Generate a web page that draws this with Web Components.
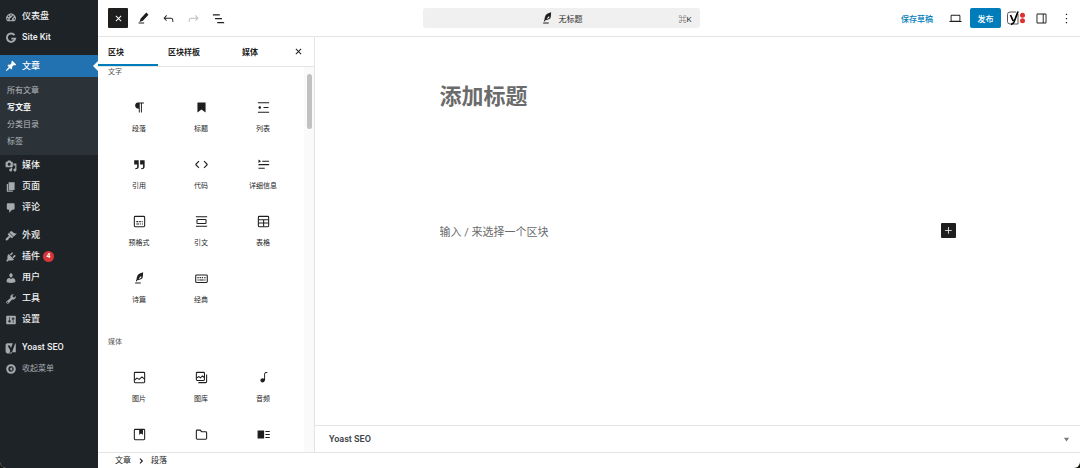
<!DOCTYPE html>
<html lang="zh-CN">
<head>
<meta charset="utf-8">
<meta name="viewport" content="width=device-width, initial-scale=1">
<title>无标题 - 写文章</title>
<style>
  html, body { margin: 0; background: #14160a; }
  body { font-family: Roboto, "Noto Sans CJK SC", sans-serif; font-size: 8px; color: #1e1e1e; }
</style>
</head>
<body>
<wp-app>
  <wp-sidebar slot="sidebar"></wp-sidebar>
  <wp-topbar slot="top"></wp-topbar>
  <wp-inserter slot="inserter">
    <wp-block-group label="文字">
      <wp-block icon="paragraph">段落</wp-block>
      <wp-block icon="heading">标题</wp-block>
      <wp-block icon="list">列表</wp-block>
      <wp-block icon="quote">引用</wp-block>
      <wp-block icon="code">代码</wp-block>
      <wp-block icon="details">详细信息</wp-block>
      <wp-block icon="preformatted">预格式</wp-block>
      <wp-block icon="pullquote">引文</wp-block>
      <wp-block icon="table">表格</wp-block>
      <wp-block icon="verse">诗篇</wp-block>
      <wp-block icon="classic">经典</wp-block>
    </wp-block-group>
    <wp-block-group label="媒体">
      <wp-block icon="image">图片</wp-block>
      <wp-block icon="gallery">图库</wp-block>
      <wp-block icon="audio">音频</wp-block>
      <wp-block icon="cover"></wp-block>
      <wp-block icon="file"></wp-block>
      <wp-block icon="mediatext"></wp-block>
    </wp-block-group>
  </wp-inserter>
  <wp-editor slot="editor"></wp-editor>
  <wp-breadcrumb slot="footer"></wp-breadcrumb>
</wp-app>

<script>
const frame = '<rect x="3.75" y="3.75" width="16.5" height="16.5" rx="1.5" fill="none" stroke="currentColor" stroke-width="1.7"/>';
const line = d => `<path d="${d}" fill="none" stroke="currentColor" stroke-width="1.7"/>`;
const fill = d => `<path fill-rule="evenodd" d="${d}"/>`;

/* name: [viewBox size, markup] */
const ICONS = {
  dashboard: [20, fill('M3.76 17h12.48A8 8 0 1 0 3.76 17zM9 6h2v2H9zM5 8h2v2H5zM13.6 7.4l1.3 1.2-3.3 4.2a2 2 0 1 1-1.9-1.3zM3.5 12h2v2h-2zM14.5 12h2v2h-2z')],
  google: [20, '<path d="M15.8 5.200A7 7 0 1 0 17 11H10.500" fill="none" stroke="currentColor" stroke-width="3.200"/>'],
  post: [20, fill('M10.44 3.02l1.82-1.82 6.36 6.35-1.83 1.82c-1.05-.68-2.48-.57-3.41.36l-.75.75c-.92.93-1.04 2.35-.35 3.41l-1.83 1.82-2.41-2.41-2.8 2.79c-.42.42-3.38 2.71-3.8 2.29s1.86-3.39 2.28-3.81l2.79-2.79L4.1 9.36l1.83-1.82c1.05.69 2.48.57 3.4-.36l.75-.75c.93-.92 1.05-2.35.36-3.41z')],
  media: [20, fill('M13 11V4c0-.55-.45-1-1-1h-1.67L9 1H5L3.67 3H2c-.55 0-1 .45-1 1v7c0 .55.45 1 1 1h10c.55 0 1-.45 1-1zM7 4.5c1.38 0 2.5 1.12 2.5 2.5S8.38 9.5 7 9.5 4.5 8.38 4.5 7 5.62 4.5 7 4.5zM14 6h5v10.5c0 1.38-1.12 2.5-2.5 2.5S14 17.88 14 16.5s1.12-2.5 2.5-2.5c.17 0 .34.02.5.05V9h-3V6zm-4 8.05V13h2v3.5c0 1.38-1.12 2.5-2.5 2.5S7 17.88 7 16.5 8.12 14 9.5 14c.17 0 .34.02.5.05z')],
  page: [20, fill('M6 15V2h10v13H6zm-1 1h8v2H3V5h2v11z')],
  comments: [20, fill('M5 2h9c1.1 0 2 .9 2 2v7c0 1.1-.9 2-2 2h-2l-5 5v-5H5c-1.1 0-2-.9-2-2V4c0-1.1.9-2 2-2z')],
  appearance: [20, fill('M14.48 11.06L7.41 3.99l1.5-1.5c.5-.56 2.3-.47 3.51.32 1.21.8 1.43 1.28 2.91 2.1 1.18.64 2.45 1.26 4.45.85zm-.71.71L6.7 4.7 4.93 6.47c-.39.39-.39 1.02 0 1.41l1.06 1.06c.39.39.39 1.03 0 1.42-.6.6-1.43 1.11-2.21 1.69-.35.26-.7.53-1.01.84C1.43 14.23.4 16.08 1.4 17.07c.99 1 2.84-.03 4.18-1.36.31-.31.58-.66.85-1.02.57-.78 1.08-1.61 1.69-2.21.39-.39 1.02-.39 1.41 0l1.06 1.06c.39.39 1.02.39 1.41 0z')],
  plugins: [20, fill('M13.11 4.36L9.87 7.6 8 5.73l3.24-3.24c.35-.34 1.05-.2 1.56.32.52.51.66 1.21.31 1.55zm-8 1.77l.91-1.12 9.01 9.01-1.19.84c-.71.71-2.63 1.16-3.82 1.16H6.14L4.9 17.26c-.59.59-1.54.59-2.12 0-.59-.58-.59-1.53 0-2.12l1.24-1.24v-3.88c0-1.13.4-3.19 1.09-3.89zm7.26 3.97l3.24-3.24c.34-.35 1.04-.21 1.55.31.52.51.66 1.21.31 1.55l-3.24 3.25z')],
  users: [20, fill('M10 9.25c-2.27 0-2.73-3.44-2.73-3.44C7 4.02 7.82 2 9.97 2c2.16 0 2.98 2.02 2.71 3.81 0 0-.41 3.44-2.68 3.44zm0 2.57L12.72 10c2.39 0 4.52 2.33 4.52 4.53v2.49s-3.65 1.13-7.24 1.13c-3.65 0-7.24-1.13-7.24-1.13v-2.49c0-2.25 1.94-4.48 4.47-4.48z')],
  tools: [20, fill('M16.68 9.77c-1.34 1.34-3.3 1.67-4.95.99l-5.41 6.52c-.99.99-2.59.99-3.58 0s-.99-2.59 0-3.57l6.52-5.42c-.68-1.65-.35-3.61.99-4.95 1.28-1.28 3.12-1.62 4.72-1.06l-2.89 2.89 2.82 2.82 2.86-2.87c.53 1.58.18 3.39-1.08 4.65zM3.81 16.21c.4.39 1.04.39 1.43 0 .4-.4.4-1.04 0-1.43-.39-.4-1.03-.4-1.43 0-.39.39-.39 1.03 0 1.43z')],
  settings: [20, fill('M18 16V4c0-.55-.45-1-1-1H3c-.55 0-1 .45-1 1v12c0 .55.45 1 1 1h14c.55 0 1-.45 1-1zM8 11h1c.55 0 1 .45 1 1s-.45 1-1 1H8v1.5c0 .28-.22.5-.5.5s-.5-.22-.5-.5V13H6c-.55 0-1-.45-1-1s.45-1 1-1h1V5.5c0-.28.22-.5.5-.5s.5.22.5.5V11zm5-2h-1c-.55 0-1-.45-1-1s.45-1 1-1h1V5.5c0-.28.22-.5.5-.5s.5.22.5.5V7h1c.55 0 1 .45 1 1s-.45 1-1 1h-1v5.5c0 .28-.22.5-.5.5s-.5-.22-.5-.5V9z')],
  collapse: [20, fill('M10 2a8 8 0 1 0 0 16 8 8 0 0 0 0-16zM10 5.6a4.4 4.4 0 1 1 0 8.8 4.4 4.4 0 0 1 0-8.8zM12 6.800v6.400L7.600 10z')],
  yoastmenu: [20, '<path d="M4 2h9l-3 8-2-4H5l4 8-1 3H18V4a2 2 0 0 0-1-2l-6 17H4a3 3 0 0 1-3-3V5a3 3 0 0 1 3-3z"/><path d="M5 6l4 7M15.500 1L8 18.500" fill="none" stroke="#1d2327" stroke-width="1.200"/>'],
  close: [24, fill('M12 13.06l3.712 3.713 1.061-1.06L13.061 12l3.712-3.712-1.06-1.06L12 10.938 8.288 7.227l-1.061 1.06L10.939 12l-3.712 3.712 1.06 1.061L12 13.061z')],
  pencil: [24, fill('m20 6-3.5-3.5-9 9.5-2 5.5 5.5-2L20 6Zm-7 12.5H4V20h9v-1.5Z')],
  undo: [24, fill('M18.3 11.7c-.6-.6-1.4-.9-2.3-.9H6.7l2.9-3.3-1.1-1-4.5 5L8.5 16l1-1-2.7-2.7H16c.5 0 .9.2 1.3.5 1 1 1 3.4 1 4.5v.3h1.5v-.2c0-1.5 0-4.3-1.5-5.7z')],
  redo: [24, '<g transform="matrix(-1 0 0 1 24 0)">' + fill('M18.3 11.7c-.6-.6-1.4-.9-2.3-.9H6.7l2.9-3.3-1.1-1-4.5 5L8.5 16l1-1-2.7-2.7H16c.5 0 .9.2 1.3.5 1 1 1 3.4 1 4.5v.3h1.5v-.2c0-1.5 0-4.3-1.5-5.7z') + '</g>'],
  listview: [24, fill('M3 5h11v2H3zM6.5 11.2h11v2h-11zM10 17.500h11v2H10z')],
  desktop: [24, fill('M20.5 16h-.7V8c0-1.1-.9-2-2-2H6.2c-1.1 0-2 .9-2 2v8h-.7c-.8 0-1.5.7-1.5 1.5h20c0-.8-.7-1.5-1.5-1.5zM5.7 8c0-.3.2-.5.5-.5h11.6c.3 0 .5.2.5.5v7.6H5.7V8z')],
  drawer: [24, fill('M18 4H6c-1.1 0-2 .9-2 2v12c0 1.1.9 2 2 2h12c1.1 0 2-.9 2-2V6c0-1.1-.9-2-2-2zm-4 14.5H6c-.3 0-.5-.2-.5-.5V6c0-.3.2-.5.5-.5h8v13zm4.5-.5c0 .3-.2.5-.5.5h-2.5v-13H18c.3 0 .5.2.5.5v12z')],
  more: [24, fill('M13 19.5h-2v-2h2zM13 13h-2v-2h2zM13 6.5h-2v-2h2z')],
  plus: [24, fill('M11 12.5V18h1.5v-5.5H18V11h-5.5V5.5H11V11H5.5v1.5z')],
  chevron: [24, '<path d="M9 5l7 7-7 7" fill="none" stroke="currentColor" stroke-width="3.500"/>'],
  toggle: [24, fill('M3 6h18l-9 13z')],
  yoast: [20, '<path d="M10 4H4a2.500 2.500 0 0 0-2.500 2.500v7A2.500 2.500 0 0 0 4 16h8V6" fill="none" stroke="#555" stroke-width="1"/><path d="M4.500 7l2.700 6M12 3.500L8 14q-1 2.300-3 2.300" fill="none" stroke="#000" stroke-width="1.700"/><circle cx="16.500" cy="7.200" r="2.500" fill="#dc3232"/><circle cx="16.500" cy="12.800" r="2.500" fill="#dc3232"/>'],
  paragraph: [24, fill('M19 4H9.9v-.1l-.9.2c-2.3.4-4 2.4-4 4.8s1.7 4.4 4 4.8l1.9.1V20h1.5V5.500h1.900V20h1.500V5.500H19z')],
  heading: [24, fill('M5.500 4v16l6.500-4.700 6.500 4.700V4z')],
  list: [24, fill('M3 3.500v1.700h18V3.500H3zm9 9.300h8v-1.700h-8v1.700zM3 20.500h18v-1.700H3v1.700zm5-8.500c0-1.100-.9-2-2-2s-2 .9-2 2 .9 2 2 2 2-.9 2-2z')],
  quote: [24, fill('M13 5v7h4.7v3.500c0 .8-.2 1.400-.5 1.700-.6.6-1.200.6-2 .5h-.3v1.800h.5c1 0 2.600-.1 3.600-1 .6-.6 1.200-1.600 1.200-2.800V5H13zM3.500 12h4.700v3.500c0 .8-.2 1.400-.5 1.700-.6.6-1.200.6-2 .5h-.3v1.800h.5c1 0 2.600-.1 3.600-1 .6-.6 1.200-1.600 1.200-2.800V5H3.500z')],
  code: [24, line('M16 6.500l4.700 4.700q.8.800 0 1.600L16 17.500M8 6.500l-4.700 4.700q-.8.800 0 1.600L8 17.500')],
  details: [24, fill('M4 17h10v1.700H4zM4 11.300h17V13H4zM10 6h11v1.700H10zM4 4l4 2.700-4 2.700z')],
  preformatted: [24, frame + line('M7 12.200h3M11.500 12.200H14M15.500 12.200H17M7 16h4.500M13 16h1.500M16 16h1.500')],
  pullquote: [24, '<rect x="4.750" y="8.750" width="14.500" height="6.500" rx="1.200" fill="none" stroke="currentColor" stroke-width="1.700"/>' + fill('M3 3.500h18v1.700H3zM3 18.800h18v1.700H3z')],
  table: [24, frame + line('M4 9.200h16M4 14.500h16M12.200 9.200V20')],
  verse: [24, fill('M17.8 2l-.9.3c-.1 0-3.6 1-5.2 2.1C10 5.5 9.3 6.5 8.9 7.1c-.6.9-1.7 4.7-1.7 6.3l-.9 2.3c-.2.4 0 .8.4 1 .1 0 .2.1.3.1.3 0 .6-.2.7-.5l.6-1.5c.3 0 .7-.1 1.2-.2.7-.1 1.4-.3 2.2-.5.8-.2 1.6-.5 2.4-.8.7-.3 1.4-.7 1.9-1.2s.8-1.2 1-1.9c.2-.7.3-1.6.4-2.4.1-.8.1-1.7.2-2.5 0-.8.1-1.5.2-2.1V2zm-2.8 8.3c-.3.7-2.400 2-4.500 2.200L14.500 8zM5 20h9v-1.500H5V20z')],
  classic: [24, '<rect x="2.750" y="6.250" width="18.500" height="12" rx="1.500" fill="none" stroke="currentColor" stroke-width="1.700"/>' + fill('M5.500 9.500h2v2h-2zM9 9.500h2v2H9zM12.500 9.500h2v2h-2zM16.500 9.500h2v2h-2zM5.500 13.500h2V15h-2zM8.500 13.500h7V15h-7zM16.500 13.500h2V15h-2z')],
  image: [24, frame + line('M4 16l4-3 3.500 2 4.500-4 4 3.500')],
  gallery: [24, '<rect x="3.750" y="3.750" width="13" height="13" rx="1.500" fill="none" stroke="currentColor" stroke-width="1.700"/>' + line('M4 13l3.500-2.500 3 2 3-3 3 2.500M20.200 7v11.500q0 1.700-1.700 1.700H7')],
  audio: [24, fill('M17.7 3.300c-1.200 0-2.800 0-3.800 1-.6.6-.9 1.500-.9 2.600V14c-.6-.6-1.500-1-2.500-1C8.600 13 7 14.600 7 16.500S8.600 20 10.500 20c1.500 0 2.800-1 3.300-2.300.5-.8.7-1.800.7-2.500V6.900c0-.7.2-1.200.5-1.600.6-.6 1.800-.6 2.800-.6h.3V3.300z')],
  cover: [24, frame + fill('M11.500 4v8.500l3-2.300 3 2.300V4z')],
  file: [24, line('M3.750 18V6.500Q3.750 5 5.250 5H10l2 2.500h6.700q1.500 0 1.500 1.500v9q0 1.500-1.500 1.500H5.250q-1.500 0-1.500-1.500z')],
  mediatext: [24, fill('M2.500 5.500h10.500v13H2.500zM15 6.500h7V8h-7zM15 11.200h7v1.500h-7zM15 16h7v1.500h-7z')]
};

/* Shared base: every element renders its template into an open shadow root. */
class Base extends HTMLElement {
  constructor() { super(); this.attachShadow({ mode: 'open' }); }
  connectedCallback() { this.shadowRoot.innerHTML = this.render(); }
}

customElements.define('wp-icon', class extends Base {
  render() {
    const [box, markup] = ICONS[this.getAttribute('name')];
    return `<style>
      :host { display: block; flex: none; width: var(--icon, 15px); height: var(--icon, 15px); }
      svg { display: block; width: 100%; height: 100%; fill: currentColor; }
    </style><svg viewBox="0 0 ${box} ${box}" aria-hidden="true">${markup}</svg>`;
  }
});

customElements.define('wp-app', class extends Base {
  render() {
    return `<style>
      :host { display: grid; grid-template-columns: 98px minmax(0, 1fr); height: 100vh; background: #fff;
        border-radius: 0 0 6px 6px; overflow: hidden; }
      .main { display: flex; flex-direction: column; min-height: 0; }
      .body { flex: 1; display: flex; min-height: 0; }
    </style>
    <slot name="sidebar"></slot>
    <div class="main">
      <slot name="top"></slot>
      <div class="body"><slot name="inserter"></slot><slot name="editor"></slot></div>
      <slot name="footer"></slot>
    </div>`;
  }
});

customElements.define('wp-menu-item', class extends Base {
  render() {
    const count = this.getAttribute('count');
    return `<style>
      :host { display: block; --icon: 12px; color: #f0f0f1; }
      a { display: flex; align-items: center; gap: 3px; height: 21px; padding-left: 5px; color: inherit;
        text-decoration: none; font-size: 9px; line-height: 21px; font-weight: 500; white-space: nowrap; }
      wp-icon { color: #a7aaad; margin-right: 2px; }
      :host([active]) a { background: #2271b1; color: #fff; height: 22px; }
      :host([active]) wp-icon { color: #fff; }
      :host([active]) a::after { content: ""; margin-left: auto; border: 5px solid transparent; border-right-color: #fff; border-left: 0; }
      :host([muted]) a { color: #a7aaad; font-weight: 400; font-size: 8px; }
      .count { width: 11px; height: 11px; border-radius: 50%; background: #d63638; color: #fff;
        font-size: 7px; line-height: 11px; text-align: center; font-weight: 600; }
    </style><a href="#"><wp-icon name="${this.getAttribute('icon')}"></wp-icon><slot></slot>${count ? `<span class="count">${count}</span>` : ''}</a>`;
  }
});

customElements.define('wp-sidebar', class extends Base {
  render() {
    return `<style>
      :host { display: block; background: #1d2327; padding-top: 6px; overflow: hidden; }
      nav { display: grid; gap: 7px; }
      .sub { background: #2c3338; padding: 5px 7px; }
      .sub a { display: block; font-size: 8px; line-height: 17px; color: #b4b9be; text-decoration: none; }
      .sub a[aria-current] { color: #fff; font-weight: 700; }
    </style>
    <nav aria-label="主菜单">
      <div>
        <wp-menu-item icon="dashboard">仪表盘</wp-menu-item>
        <wp-menu-item icon="google">Site Kit</wp-menu-item>
      </div>
      <div>
        <wp-menu-item icon="post" active>文章</wp-menu-item>
        <div class="sub">
          <a href="#">所有文章</a><a href="#" aria-current="page">写文章</a><a href="#">分类目录</a><a href="#">标签</a>
        </div>
        <wp-menu-item icon="media">媒体</wp-menu-item>
        <wp-menu-item icon="page">页面</wp-menu-item>
        <wp-menu-item icon="comments">评论</wp-menu-item>
      </div>
      <div>
        <wp-menu-item icon="appearance">外观</wp-menu-item>
        <wp-menu-item icon="plugins" count="4">插件</wp-menu-item>
        <wp-menu-item icon="users">用户</wp-menu-item>
        <wp-menu-item icon="tools">工具</wp-menu-item>
        <wp-menu-item icon="settings">设置</wp-menu-item>
      </div>
      <div>
        <wp-menu-item icon="yoastmenu">Yoast SEO</wp-menu-item>
        <wp-menu-item icon="collapse" muted>收起菜单</wp-menu-item>
      </div>
    </nav>`;
  }
});

customElements.define('wp-icon-button', class extends Base {
  render() {
    return `<style>
      :host { display: block; flex: none; }
      button { display: grid; place-items: center; width: var(--size, 20px); height: var(--size, 20px); padding: 0; border: 0;
        border-radius: 1px; background: none; color: #1e1e1e; }
      :host([dark]) button { background: #1e1e1e; color: #fff; }
      :host([disabled]) button { color: #bbb; }
    </style><button type="button" aria-label="${this.getAttribute('label')}" ${this.hasAttribute('disabled') ? 'disabled' : ''}><wp-icon name="${this.getAttribute('icon')}"></wp-icon></button>`;
  }
});

customElements.define('wp-topbar', class extends Base {
  render() {
    return `<style>
      :host { display: flex; align-items: center; justify-content: space-between; height: 36px; flex: none;
        padding: 0 4px 0 10px; border-bottom: 1px solid #e4e4e4; }
      .group { display: flex; align-items: center; gap: 5px; }
      button { font: inherit; border: 0; border-radius: 2px; padding: 0; }
      .doc { display: grid; grid-template-columns: 1fr auto 1fr; align-items: center; flex: 0 1 277px; height: 20px;
        border-radius: 3px; background: #f0f0f0; color: #2f2f2f; font-size: 8px; }
      .name { grid-column: 2; display: flex; align-items: center; gap: 4px; }
      .name wp-icon { color: #1e1e1e; }
      .key { justify-self: end; padding-right: 8px; }
      .save { background: none; color: #007cba; padding: 0 7px; font-size: 8px; font-weight: 500; }
      .publish { width: 31px; height: 20px; background: #007cba; color: #fff; font-size: 8px; font-weight: 500; }
      .yoast { --icon: 20px; }
    </style>
    <div class="group">
      <wp-icon-button dark icon="close" label="关闭区块插入器"></wp-icon-button>
      <wp-icon-button icon="pencil" label="工具"></wp-icon-button>
      <wp-icon-button icon="undo" label="撤销"></wp-icon-button>
      <wp-icon-button icon="redo" label="重做" disabled></wp-icon-button>
      <wp-icon-button icon="listview" label="文档概览"></wp-icon-button>
    </div>
    <button class="doc" type="button"><span class="name"><wp-icon name="verse"></wp-icon><span>无标题</span></span><span class="key">⌘K</span></button>
    <div class="group">
      <button class="save" type="button">保存草稿</button>
      <wp-icon-button icon="desktop" label="预览"></wp-icon-button>
      <button class="publish" type="button">发布</button>
      <wp-icon-button class="yoast" icon="yoast" label="Yoast SEO"></wp-icon-button>
      <wp-icon-button icon="drawer" label="设置"></wp-icon-button>
      <wp-icon-button icon="more" label="选项"></wp-icon-button>
    </div>`;
  }
});

customElements.define('wp-inserter', class extends Base {
  render() {
    return `<style>
      :host { display: flex; flex-direction: column; flex: none; width: 216px; border-right: 1px solid #e4e4e4; }
      .tabs { display: flex; align-items: stretch; height: 29px; flex: none; border-bottom: 1px solid #e4e4e4; padding-right: 6px; }
      .tabs button { font: inherit; font-size: 8px; font-weight: 600; color: #1e1e1e; background: none; border: 0; padding: 0 10px; }
      .tabs button:first-child { width: 60px; text-align: left; box-shadow: inset 0 -2px #007cba; }
      .tabs button:nth-child(2) { width: 74px; text-align: left; }
      .tabs wp-icon-button { margin-left: auto; align-self: center; }
      .view { flex: 1; display: flex; min-height: 0; }
      .list { flex: 1; overflow-y: auto; scrollbar-width: none; padding: 0 10px; }
      .track { width: 10px; background: #fafafa; padding-top: 7px; }
      .thumb { width: 5px; height: 55px; margin: 0 auto; border-radius: 3px; background: #c1c1c1; }
    </style>
    <div class="tabs" role="tablist">
      <button type="button" role="tab" aria-selected="true">区块</button>
      <button type="button" role="tab">区块样板</button>
      <button type="button" role="tab">媒体</button>
      <wp-icon-button icon="close" label="关闭"></wp-icon-button>
    </div>
    <div class="view">
      <div class="list"><slot></slot></div>
      <div class="track" aria-hidden="true"><div class="thumb"></div></div>
    </div>`;
  }
});

customElements.define('wp-block-group', class extends Base {
  render() {
    return `<style>
      :host { display: block; margin-bottom: 19px; }
      h2 { margin: 0 0 13px; font-size: 7px; line-height: 10px; font-weight: 400; color: #555; }
      .grid { display: grid; grid-template-columns: repeat(3, 1fr); grid-auto-rows: 57px; }
    </style><h2>${this.getAttribute('label')}</h2><div class="grid"><slot></slot></div>`;
  }
});

customElements.define('wp-block', class extends Base {
  render() {
    return `<style>
      :host { display: block; }
      button { display: flex; flex-direction: column; align-items: center; gap: 7px; width: 100%; height: 100%; padding: 10px 0;
        border: 0; background: none; font: inherit; font-size: 7px; line-height: 15px; color: #1e1e1e; white-space: nowrap; }
    </style><button type="button"><wp-icon name="${this.getAttribute('icon')}"></wp-icon><span><slot></slot></span></button>`;
  }
});

customElements.define('wp-editor', class extends Base {
  render() {
    return `<style>
      :host { display: flex; flex-direction: column; flex: 1; min-width: 0; }
      .canvas { flex: 1; display: flex; flex-direction: column; gap: 111px; width: 100%; max-width: 516px; margin: 0 auto; padding-top: 45px; box-sizing: border-box; }
      input { font: inherit; color: #1e1e1e; border: 0; padding: 0; margin: 0; background: none; outline: 0; width: 100%; min-width: 0; }
      input::placeholder { color: #6b6b6b; opacity: 1; }
      .title { font-size: 22px; line-height: 30px; height: 30px; font-weight: 700; }
      .row { display: flex; align-items: flex-start; }
      .text { font-size: 11px; line-height: 20px; height: 20px; }
      .row wp-icon-button { --size: 15px; --icon: 13px; }
      .meta { display: flex; align-items: center; justify-content: space-between; height: 27px; flex: none; padding: 0 10px 0 14px;
        border: 0; border-top: 1px solid #e4e4e4; background: none; text-align: left; font: inherit; font-size: 9px; font-weight: 600; color: #3c434a; }
      .meta wp-icon { --icon: 7px; color: #787c82; }
    </style>
    <div class="canvas">
      <input class="title" type="text" aria-label="添加标题" placeholder="添加标题">
      <div class="row">
        <input class="text" type="text" aria-label="区块" placeholder="输入 / 来选择一个区块">
        <wp-icon-button dark icon="plus" label="添加区块"></wp-icon-button>
      </div>
    </div>
    <button class="meta" type="button"><span>Yoast SEO</span><wp-icon name="toggle"></wp-icon></button>`;
  }
});

customElements.define('wp-breadcrumb', class extends Base {
  render() {
    return `<style>
      :host { display: flex; align-items: center; gap: 6px; height: 15px; flex: none; padding-left: 17px;
        border-top: 1px solid #e4e4e4; --icon: 8px; font-size: 8px; line-height: 15px; }
      a { color: inherit; text-decoration: none; }
    </style><a href="#">文章</a><wp-icon name="chevron"></wp-icon><span>段落</span>`;
  }
});
</script>
</body>
</html>
